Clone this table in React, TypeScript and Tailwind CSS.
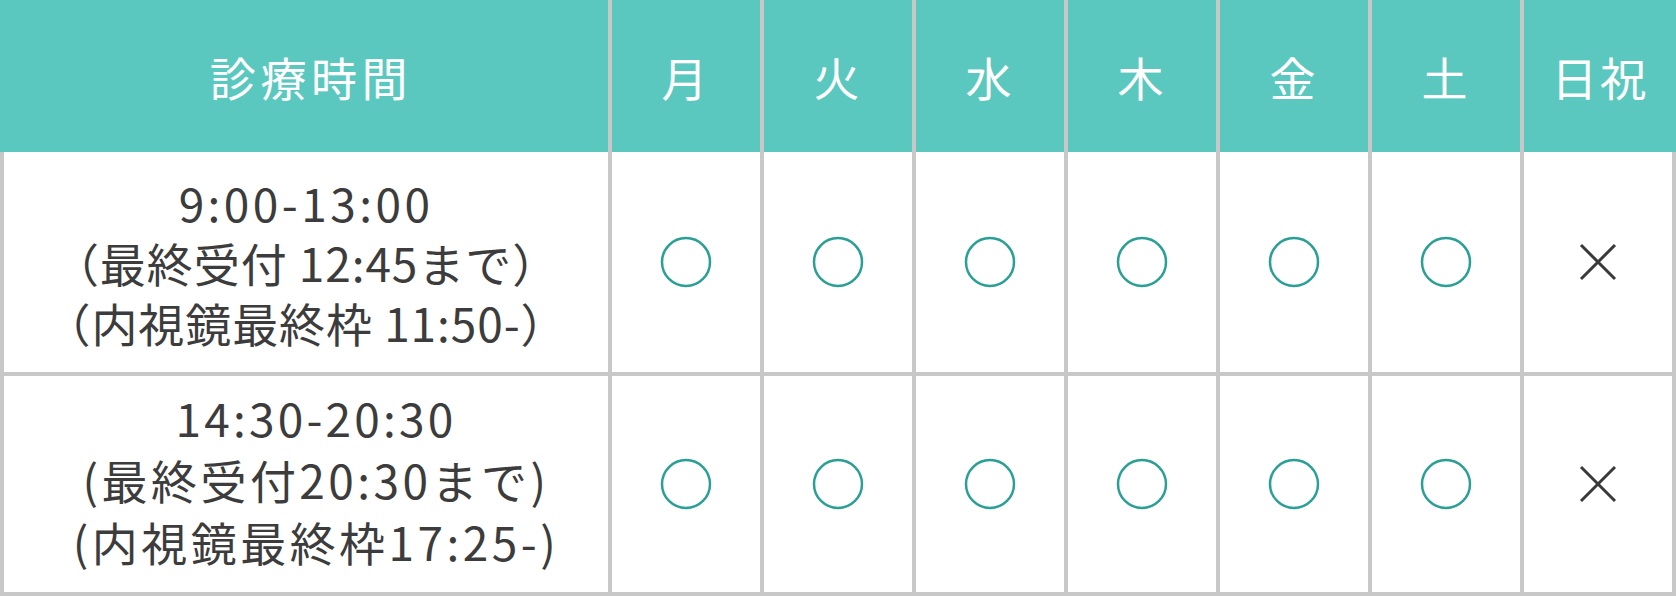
const DAYS = ['月', '火', '水', '木', '金', '土', '日祝']

const ROWS = [
  {
    lines: ['9:00-13:00', '（最終受付 12:45まで）', '（内視鏡最終枠 11:50-）'],
    first: 'tracking-[0.075em]',
    rest: 'tracking-[0.02em]',
    box: 'leading-[60px]',
    open: [true, true, true, true, true, true, false],
  },
  {
    lines: ['14:30-20:30', '(最終受付20:30まで)', '(内視鏡最終枠17:25-)'],
    first: 'tracking-[0.07em]',
    rest: 'tracking-[0.075em]',
    box: 'leading-[62px] pl-[20px] pb-[10px]',
    open: [true, true, true, true, true, true, false],
  },
]

function Circle() {
  return (
    <svg width="52" height="52" viewBox="0 0 52 52">
      <circle cx="26" cy="26" r="24" fill="none" stroke="#2a9f95" strokeWidth="2.5" />
    </svg>
  )
}

function Cross() {
  return (
    <svg width="38" height="38" viewBox="0 0 38 38">
      <path d="M2 2 L36 36 M36 2 L2 36" stroke="#3a3a3a" strokeWidth="3" />
    </svg>
  )
}

export default function App() {
  return (
    <div className="w-[1676px] bg-white [font-family:'Noto_Sans_CJK_JP',sans-serif]">
      {/* header */}
      <div className="grid h-[152px] grid-cols-[608px_repeat(6,148px)_152px] gap-x-[4px] bg-[#c8c8c8]">
        <div className="flex items-center justify-center bg-[#5bc8c0] pl-[14px] text-[46px] tracking-[0.1em] text-white">
          診療時間
        </div>
        {DAYS.map((d) => (
          <div
            key={d}
            className="flex items-center justify-center bg-[#5bc8c0] text-[46px] tracking-[0.06em] text-white"
          >
            {d}
          </div>
        ))}
      </div>

      {/* body */}
      <div className="grid grid-cols-[604px_repeat(7,148px)] grid-rows-[220px_216px] gap-[4px] bg-[#c8c8c8] px-[4px] pb-[4px]">
        {ROWS.map((row, i) => (
          <div key={i} className="contents">
            <div
              className={`flex flex-col items-center justify-center bg-white text-[46px] text-[#3c3c3c] ${row.box}`}
            >
              {row.lines.map((l, k) => (
                <div key={l} className={`whitespace-nowrap ${k === 0 ? row.first : row.rest}`}>
                  {l}
                </div>
              ))}
            </div>
            {row.open.map((o, j) => (
              <div key={j} className="flex items-center justify-center bg-white">
                {o ? <Circle /> : <Cross />}
              </div>
            ))}
          </div>
        ))}
      </div>
    </div>
  )
}
